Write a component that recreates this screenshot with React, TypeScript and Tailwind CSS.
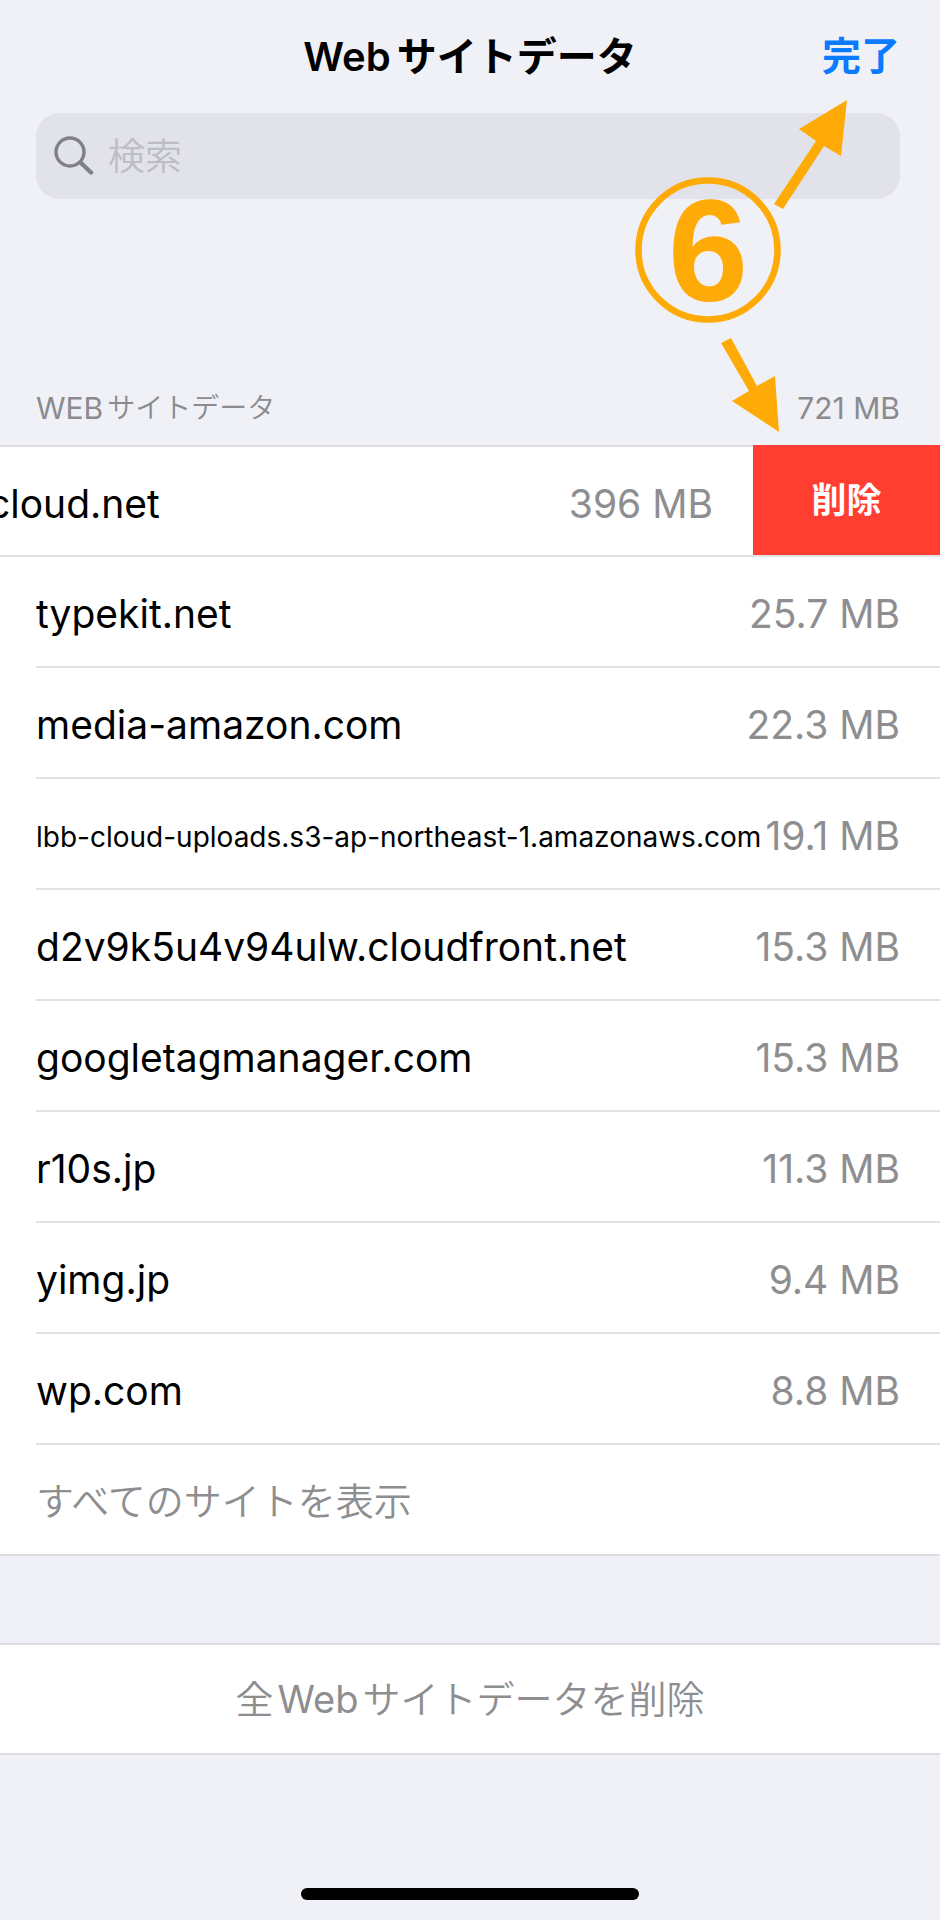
import { useState } from "react";

type Site = { name: string; size: string; small?: boolean };

const sites: Site[] = [
  { name: "typekit.net", size: "25.7 MB" },
  { name: "media-amazon.com", size: "22.3 MB" },
  { name: "lbb-cloud-uploads.s3-ap-northeast-1.amazonaws.com", size: "19.1 MB", small: true },
  { name: "d2v9k5u4v94ulw.cloudfront.net", size: "15.3 MB" },
  { name: "googletagmanager.com", size: "15.3 MB" },
  { name: "r10s.jp", size: "11.3 MB" },
  { name: "yimg.jp", size: "9.4 MB" },
  { name: "wp.com", size: "8.8 MB" },
];

function SearchIcon() {
  return (
    <svg className="w-10 h-10 shrink-0" viewBox="0 0 40 40" fill="none" stroke="#808087" aria-hidden="true">
      <circle cx="16" cy="16" r="14" strokeWidth="3.4" />
      <path d="M26.5 26.5L37 36.5" strokeWidth="4.4" strokeLinecap="round" />
    </svg>
  );
}

// Step marker with arrows to the two buttons
function StepMarker() {
  return (
    <div className="absolute top-[90px] right-20 w-[240px] h-[350px] pointer-events-none text-[#ffab07]">
      <svg className="w-full h-full" viewBox="0 0 240 350" fill="currentColor" aria-hidden="true">
        <circle cx="88" cy="160" r="69.5" fill="none" stroke="currentColor" strokeWidth="6.5" />
        <path d="M154 114L196 51L179 39L227 10L221 66L204 56L163 119Z" />
        <path d="M101 253L111 248L137 296L155 286L159 342L112 311L129 301Z" />
      </svg>
      <span className="absolute top-[90px] left-4 w-36 text-center font-['Liberation_Sans',sans-serif] font-bold text-[144px] leading-[144px]">
        6
      </span>
    </div>
  );
}

function SiteRow({ site }: { site: Site }) {
  return (
    <li className="ml-9 pt-1.5 pr-10 h-[111px] flex items-center justify-between border-b-2 border-[#e1e1e3] whitespace-nowrap">
      <span className={site.small ? "text-[28px]" : "text-[39px]"}>{site.name}</span>
      <span className="text-[39px] text-[#8e8e90]">{site.size}</span>
    </li>
  );
}

export default function App() {
  const [query, setQuery] = useState("");

  return (
    <div
      lang="ja"
      className="relative min-h-screen flex flex-col overflow-hidden bg-[#f0f1f6] text-black font-['Inter','Noto_Sans_CJK_JP',sans-serif]"
    >
      <header className="h-[113px] grid grid-cols-[1fr_auto_1fr] items-center px-10">
        <h1 className="col-start-2 flex gap-1.5 text-[40px] font-semibold">
          <span>Web</span>
          <span>サイトデータ</span>
        </h1>
        <button type="button" className="justify-self-end text-[39px] font-semibold text-[#0a7aff]">
          完了
        </button>
      </header>

      <label className="ml-9 mr-10 h-[86px] px-[18px] flex items-center gap-3.5 rounded-3xl bg-[#e2e2ea]">
        <SearchIcon />
        <input
          type="search"
          aria-label="検索"
          placeholder="検索"
          value={query}
          onChange={(e) => setQuery(e.target.value)}
          className="flex-1 min-w-0 pt-0.5 bg-transparent outline-none text-[37px] font-[350] placeholder:text-[#bdbdc4]"
        />
      </label>

      <div className="mt-[189px] pl-9 pr-10 h-[57px] flex items-start justify-between text-[30px] leading-[40px] text-[#8a8a8f]">
        <h2 className="flex gap-1">
          <span>WEB</span>
          <span className="text-[28px] font-[350]">サイトデータ</span>
        </h2>
        <span>721 MB</span>
      </div>

      <ul className="bg-white border-t-2 border-[#dcdde1]">
        <li className="h-[110px] flex items-center border-b-2 border-[#e1e1e3] text-[39px] whitespace-nowrap">
          <span className="-ml-3 pt-1.5">cloud.net</span>
          <span className="ml-auto mr-10 pt-1.5 text-[#8e8e90]">396 MB</span>
          <button type="button" className="w-[187px] self-stretch -mt-0.5 bg-[#ff3d31] text-white text-[35px] font-bold">
            削除
          </button>
        </li>
        {sites.map((site) => (
          <SiteRow key={site.name} site={site} />
        ))}
        <li className="h-[111px] border-b-2 border-[#dcdde1]">
          <button type="button" className="w-full h-full pt-1 pl-9 text-left text-[38px] font-[350] text-[#8e8e90]">
            すべてのサイトを表示
          </button>
        </li>
      </ul>

      <button
        type="button"
        className="mt-[87px] h-[112px] flex items-center justify-center gap-1 bg-white border-y-2 border-[#dcdde1] text-[38px] text-[#8e8e90]"
      >
        <span className="font-[350]">全</span>
        <span>Web</span>
        <span className="font-[350]">サイトデータを削除</span>
      </button>

      <div className="mt-auto pt-10 pb-5 flex justify-center">
        <div className="w-[36%] h-3 rounded-full bg-black" />
      </div>

      <StepMarker />
    </div>
  );
}
